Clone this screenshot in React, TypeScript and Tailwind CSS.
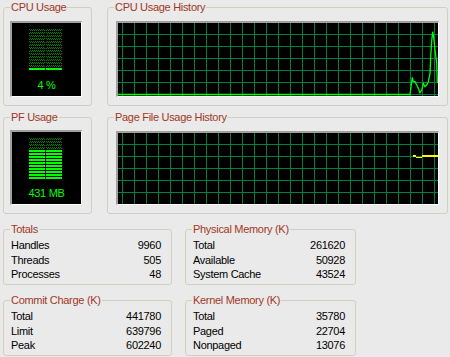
import { useId } from "react";

const GRID_X = Array.from({ length: 27 }, (_, i) => 4.5 + i * 12);
const GRID_Y = Array.from({ length: 6 }, (_, i) => 11.5 + i * 12);

function Meter({ lit }: { lit: number }) {
  const id = useId().replace(/:/g, "");
  const rows = 14;
  return (
    <svg width={33} height={42} shapeRendering="crispEdges">
      <defs>
        <pattern id={id} width={2} height={2} patternUnits="userSpaceOnUse">
          <rect x={0} y={0} width={1} height={1} fill="#008000" />
          <rect x={1} y={1} width={1} height={1} fill="#008000" />
        </pattern>
      </defs>
      {Array.from({ length: rows }, (_, i) => {
        const on = i >= rows - lit;
        const fill = on ? "#00ff00" : `url(#${id})`;
        return (
          <g key={i}>
            <rect x={0} y={i * 3} width={16} height={2} fill={fill} />
            <rect x={17} y={i * 3} width={16} height={2} fill={fill} />
          </g>
        );
      })}
    </svg>
  );
}

function Graph({ h, children }: { h: number; children?: React.ReactNode }) {
  return (
    <svg width={320} height={h} className="block bg-black" shapeRendering="crispEdges">
      {GRID_X.map((x) => (
        <line key={x} x1={x} y1={0} x2={x} y2={h} stroke="#008040" strokeWidth={1} />
      ))}
      {GRID_Y.map((y) => (
        <line key={y} x1={0} y1={y} x2={320} y2={y} stroke="#008040" strokeWidth={1} />
      ))}
      {children}
    </svg>
  );
}

function Group({
  title,
  className,
  children,
}: {
  title: string;
  className: string;
  children: React.ReactNode;
}) {
  return (
    <fieldset className={`border border-[#d0d0bf] rounded-[3px] min-w-0 ${className}`}>
      <legend className="ml-[6px] px-[1px] leading-[13px] text-[#a0381e]">{title}</legend>
      {children}
    </fieldset>
  );
}

function Stats({ rows }: { rows: [string, string][] }) {
  return (
    <div className="pt-[2px] pl-[7px] pr-[10px]">
      {rows.map(([k, v]) => (
        <div key={k} className="flex justify-between leading-[14.5px] text-black">
          <span>{k}</span>
          <span>{v}</span>
        </div>
      ))}
    </div>
  );
}

const sunken =
  "border-t-2 border-l-2 border-r border-b border-t-[#a0a0a0] border-l-[#a0a0a0] border-r-white border-b-white bg-black";

export default function App() {
  const cpuPath =
    "M0 71.5 H292 L294.3 54.3 L295.3 58.7 L297 58.7 L298.7 62 L300.3 65.3 L302 69.7 L303.7 67 L305.3 60.3 L307 63.7 L308.7 62 L310.3 58.7 L312 50.3 L312.7 33.7 L313.7 17.7 L314.7 8.7 L316 17 L317 27 L318.7 40.3 L319.3 58.7 L320 60";

  return (
    <div className="w-[450px] h-[357px] bg-[#eaeaea] overflow-hidden font-['Liberation_Sans',Arial,sans-serif] text-[11px] tracking-[-0.3px] pt-[1px]">
      <div className="flex pl-[3px] gap-[15px]">
        <Group title="CPU Usage" className="w-[89px] h-[105px]">
          <div className={`${sunken} mt-[7px] ml-[6px] w-[72px] h-[76px] pt-[6px]`}>
            <div className="ml-[17px]">
              <Meter lit={1} />
            </div>
            <div className="mt-[8px] text-center leading-[13px] text-[#00ff00]">4 %</div>
          </div>
        </Group>
        <Group title="CPU Usage History" className="w-[341px] h-[105px]">
          <div className={`${sunken} mt-[7px] ml-[8px] w-[323px] h-[76px]`}>
            <Graph h={73}>
              <path d={cpuPath} fill="none" stroke="#00ff00" strokeWidth={1.3} shapeRendering="auto" />
            </Graph>
          </div>
        </Group>
      </div>

      <div className="flex pl-[3px] gap-[15px] mt-[5px]">
        <Group title="PF Usage" className="w-[89px] h-[103px]">
          <div className={`${sunken} mt-[6px] ml-[6px] w-[72px] h-[75px] pt-[6px]`}>
            <div className="ml-[17px]">
              <Meter lit={10} />
            </div>
            <div className="mt-[7px] text-center leading-[13px] text-[#00ff00]">431 MB</div>
          </div>
        </Group>
        <Group title="Page File Usage History" className="w-[341px] h-[103px]">
          <div className={`${sunken} mt-[7px] ml-[8px] w-[323px] h-[74px]`}>
            <Graph h={71}>
              <path
                d="M295 22.8 H298 M298 24.3 H304 M304 22.8 H320"
                fill="none"
                stroke="#ffff00"
                strokeWidth={1.5}
              />
            </Graph>
          </div>
        </Group>
      </div>

      <div className="flex pl-[3px] gap-[13px] mt-[9px]">
        <Group title="Totals" className="w-[169px] h-[62px]">
          <Stats
            rows={[
              ["Handles", "9960"],
              ["Threads", "505"],
              ["Processes", "48"],
            ]}
          />
        </Group>
        <Group title="Physical Memory (K)" className="w-[171px] h-[62px]">
          <Stats
            rows={[
              ["Total", "261620"],
              ["Available", "50928"],
              ["System Cache", "43524"],
            ]}
          />
        </Group>
      </div>

      <div className="flex pl-[3px] gap-[13px] mt-[9px]">
        <Group title="Commit Charge (K)" className="w-[169px] h-[62px]">
          <Stats
            rows={[
              ["Total", "441780"],
              ["Limit", "639796"],
              ["Peak", "602240"],
            ]}
          />
        </Group>
        <Group title="Kernel Memory (K)" className="w-[171px] h-[62px]">
          <Stats
            rows={[
              ["Total", "35780"],
              ["Paged", "22704"],
              ["Nonpaged", "13076"],
            ]}
          />
        </Group>
      </div>
    </div>
  );
}
